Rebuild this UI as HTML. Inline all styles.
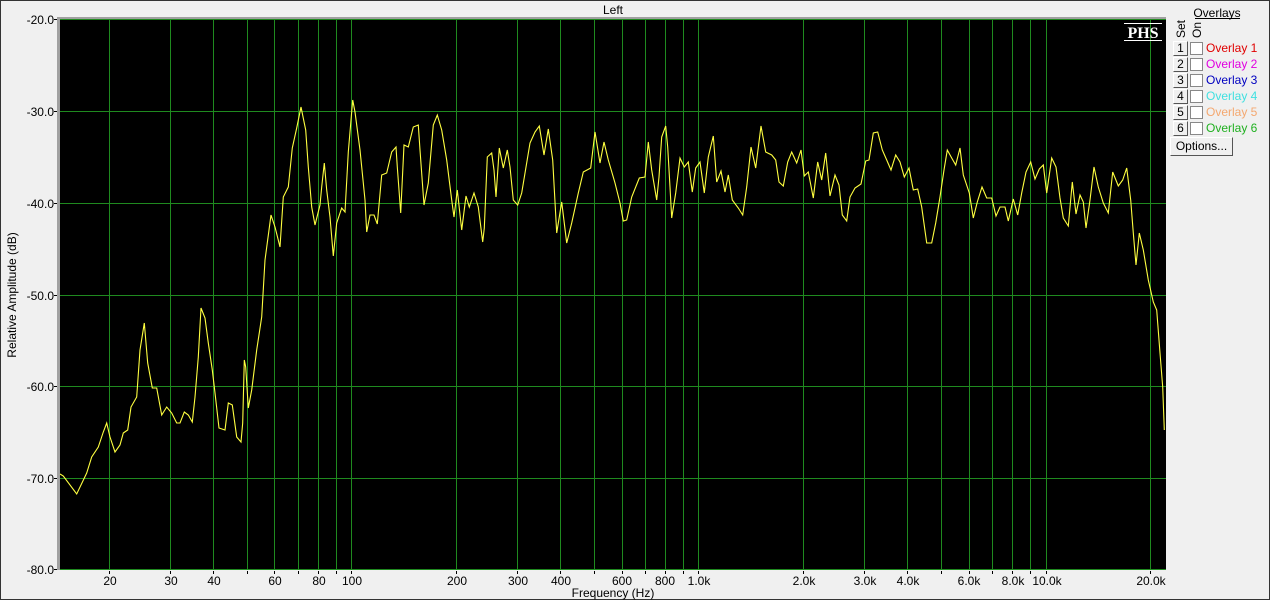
<!DOCTYPE html>
<html><head><meta charset="utf-8"><style>
html,body{margin:0;padding:0;}
body{width:1270px;height:600px;background:#f0f0f0;position:relative;overflow:hidden;font-family:"Liberation Sans",Arial,sans-serif;font-size:12px;}
.frame{position:absolute;left:0;top:0;width:1268px;height:598px;border:1px solid #333;}
.ab{position:absolute;white-space:nowrap;}
.btn{position:absolute;left:1173px;width:13px;height:13px;background:#f0f0f0;border:1px solid;border-color:#fff #555 #555 #fff;font-size:12px;line-height:13px;text-align:center;color:#000;}
.cb{position:absolute;left:1190px;width:11px;height:11px;background:#fff;border:1px solid #888;}
.ol{position:absolute;left:1206px;font-size:12px;line-height:14px;}
</style></head><body>
<div class="frame"></div>
<svg class="ab" style="left:0;top:0" width="1270" height="600" xmlns="http://www.w3.org/2000/svg">
<rect x="60" y="19" width="1106" height="551" fill="#000"/>
<rect x="57" y="17" width="3" height="553" fill="#a0a0a0"/>
<rect x="57" y="17" width="1109" height="2" fill="#a0a0a0"/>
<g stroke="#1f8a1f" stroke-width="1" shape-rendering="crispEdges">
<path d="M60 19.5H1166M60 111.5H1166M60 203.5H1166M60 295.5H1166M60 386.5H1166M60 478.5H1166M60 569.5H1166"/>
<path d="M109.5 19V570M170.5 19V570M213.5 19V570M247.5 19V570M274.5 19V570M298.5 19V570M318.5 19V570M336.5 19V570M351.5 19V570M456.5 19V570M517.5 19V570M560.5 19V570M594.5 19V570M622.5 19V570M645.5 19V570M665.5 19V570M683.5 19V570M698.5 19V570M803.5 19V570M864.5 19V570M907.5 19V570M941.5 19V570M969.5 19V570M992.5 19V570M1012.5 19V570M1030.5 19V570M1046.5 19V570M1150.5 19V570"/>
</g>
<g stroke="#000" stroke-width="1" shape-rendering="crispEdges">
<path d="M54 19.5H57M54 111.5H57M54 203.5H57M54 295.5H57M54 386.5H57M54 478.5H57M54 569.5H57"/>
<path d="M109.5 571V574M170.5 571V574M213.5 571V574M247.5 571V574M274.5 571V574M298.5 571V574M318.5 571V574M336.5 571V574M351.5 571V574M456.5 571V574M517.5 571V574M560.5 571V574M594.5 571V574M622.5 571V574M645.5 571V574M665.5 571V574M683.5 571V574M698.5 571V574M803.5 571V574M864.5 571V574M907.5 571V574M941.5 571V574M969.5 571V574M992.5 571V574M1012.5 571V574M1030.5 571V574M1046.5 571V574M1150.5 571V574"/>
</g>
<polyline fill="none" stroke="#ffff40" stroke-width="1.1" points="60,474 63.3,476 76.7,494 86.7,473 91.7,457 98.3,447 103.3,432 106.7,423 110,437 115,452 120,445 123.3,433 127.7,430 131,407 136.7,397 140,350 144.3,323 147.7,363 152.3,388 156.7,388 161.7,415 166.7,407 171.7,413 176.7,423 180,423 184.3,412 188.3,415 192.3,422 195,397 198.3,357 201,308 205,318 208.3,343 212.3,370 215,393 219,428 225,430 228.3,403 232.3,405 236.7,437 241,442 242.7,423 244.3,360 245.7,367 248.3,408 251.7,390 256.7,350 261.7,317 265,260 271,215 275,227 280,247 283.3,197 288.3,187 292.3,148 296.7,128 301,107 305.7,130 308.3,167 311.7,207 315,225 320,205 321.7,187 324.3,163 326.7,190 330,217 333.3,256 336.7,223 341.7,208 345,212 348.3,152 352.7,100 355,112 360,150 365,200 366.7,232 370,215 374,215 377.3,224 381.7,175 386.7,173 391.7,152 396,147 397.3,167 400.7,213 404,145 408.3,147 413.3,127 418.3,125 420,150 424,205 428.3,183 433.3,125 437.3,115 441.7,130 446.7,160 451.7,200 454,217 457.3,190 461.7,230 466,196 469.3,207 474,193 478.3,207 482.7,242 484.3,228 487.3,157 491.7,153 494,170 496,197 499.3,148 503.3,168 507.3,150 510,167 513.3,200 517.7,205 521.7,193 530,143 535,132 539.3,126 544,155 548.3,129 552.7,160 556.7,233 561.7,202 566.7,243 571.7,223 578.3,193 583.3,172 590.7,168 595,132 600,163 604,142 608.3,160 615,183 620,203 623.3,221 626.7,220 631.7,197 639.3,178 645,177 648.3,142 651.7,170 656.7,200 659,177 661.7,137 665.7,126 667.7,147 670,187 671.7,218 675.7,193 680,158 684.3,167 688.3,162 692.3,192 695.7,168 700,162 704.3,193 708.3,157 713.3,136 716.7,182 721,171 725,192 728.3,175 732.3,200 738.3,208 742.7,215 746.7,187 751,147 755.7,168 761,126 765.7,152 771.7,155 775.7,160 779,182 783.3,186 787.7,162 791.7,152 796.7,163 801,150 804.3,176 808.3,172 813.3,198 817.7,162 821.7,180 825.7,153 830,196 835,175 839,185 842.3,215 846.7,221 850,197 855,188 861,184 865.7,161 869,160 873.3,133 877.7,132 882.3,150 886.7,160 891,170 895.7,155 900,162 904.3,177 909,168 913.3,190 917.7,189 921.7,207 926.7,243 931.7,243 935.7,223 940,197 944,170 947.3,150 951.7,158 955.7,165 960,148 963.3,175 969.3,193 973.3,218 977.3,202 982,187 986.7,198 991.7,198 996,216 1000,207 1005,207 1008.3,221 1013.3,199 1017.7,215 1021.7,193 1026,172 1030.7,162 1035,179 1039.3,169 1043.3,165 1046.7,193 1051.7,158 1056,167 1060,198 1063.3,218 1068.3,226 1072.3,182 1076,214 1080,195 1083.3,202 1086,228 1090,200 1094,167 1098.3,187 1103.3,203 1108.3,213 1112.7,172 1118.3,186 1122.7,180 1126.7,168 1130.7,200 1133.3,233 1136,265 1139.3,233 1143.3,250 1148.3,280 1153.3,302 1156.7,310 1160,353 1162.7,387 1164.3,430"/>
<g font-family="Liberation Sans,Arial,sans-serif" font-size="12" fill="#000" text-anchor="end">
<text x="54" y="24">-20.0</text><text x="54" y="116">-30.0</text><text x="54" y="208">-40.0</text><text x="54" y="300">-50.0</text><text x="54" y="391">-60.0</text><text x="54" y="483">-70.0</text><text x="54" y="574">-80.0</text>
</g>
<g font-family="Liberation Sans,Arial,sans-serif" font-size="12" fill="#000" text-anchor="middle">
<text x="110" y="585">20</text><text x="171" y="585">30</text><text x="214" y="585">40</text><text x="275" y="585">60</text><text x="319" y="585">80</text><text x="352" y="585">100</text><text x="457" y="585">200</text><text x="518" y="585">300</text><text x="561" y="585">400</text><text x="622" y="585">600</text><text x="665" y="585">800</text><text x="699" y="585">1.0k</text><text x="804" y="585">2.0k</text><text x="865" y="585">3.0k</text><text x="908" y="585">4.0k</text><text x="969" y="585">6.0k</text><text x="1013" y="585">8.0k</text><text x="1047" y="585">10.0k</text><text x="1151" y="585">20.0k</text>
<text x="613" y="597">Frequency (Hz)</text>
<text x="613" y="14">Left</text>
<text transform="translate(16,295) rotate(-90)">Relative Amplitude (dB)</text>
</g>
<text x="1143" y="38" font-family="Liberation Serif,serif" font-weight="bold" font-size="16" fill="#fff" text-anchor="middle">PHS</text>
<line x1="1124" y1="23.5" x2="1162" y2="23.5" stroke="#fff"/>
<line x1="1124" y1="40.5" x2="1162" y2="40.5" stroke="#fff"/>
<g font-family="Liberation Sans,Arial,sans-serif" font-size="12" fill="#000">
<text x="1217" y="17" text-anchor="middle">Overlays</text>
<text transform="translate(1185,38) rotate(-90)">Set</text>
<text transform="translate(1201,38) rotate(-90)">On</text>
</g>
<line x1="1195" y1="18.5" x2="1240" y2="18.5" stroke="#000"/>
</svg>
<div class="btn" style="top:41px">1</div><div class="cb" style="top:42px"></div><div class="ol" style="top:41px;color:#e00000">Overlay 1</div>
<div class="btn" style="top:57px">2</div><div class="cb" style="top:58px"></div><div class="ol" style="top:57px;color:#e000e0">Overlay 2</div>
<div class="btn" style="top:73px">3</div><div class="cb" style="top:74px"></div><div class="ol" style="top:73px;color:#0000c0">Overlay 3</div>
<div class="btn" style="top:89px">4</div><div class="cb" style="top:90px"></div><div class="ol" style="top:89px;color:#40e0e0">Overlay 4</div>
<div class="btn" style="top:105px">5</div><div class="cb" style="top:106px"></div><div class="ol" style="top:105px;color:#f4a870">Overlay 5</div>
<div class="btn" style="top:121px">6</div><div class="cb" style="top:122px"></div><div class="ol" style="top:121px;color:#20b020">Overlay 6</div>
<div class="ab" style="left:1170px;top:137px;width:61px;height:17px;border:1px solid;border-color:#fff #555 #555 #fff;background:#f0f0f0;text-align:center;line-height:17px;font-size:12px;">Options...</div>
</body></html>
